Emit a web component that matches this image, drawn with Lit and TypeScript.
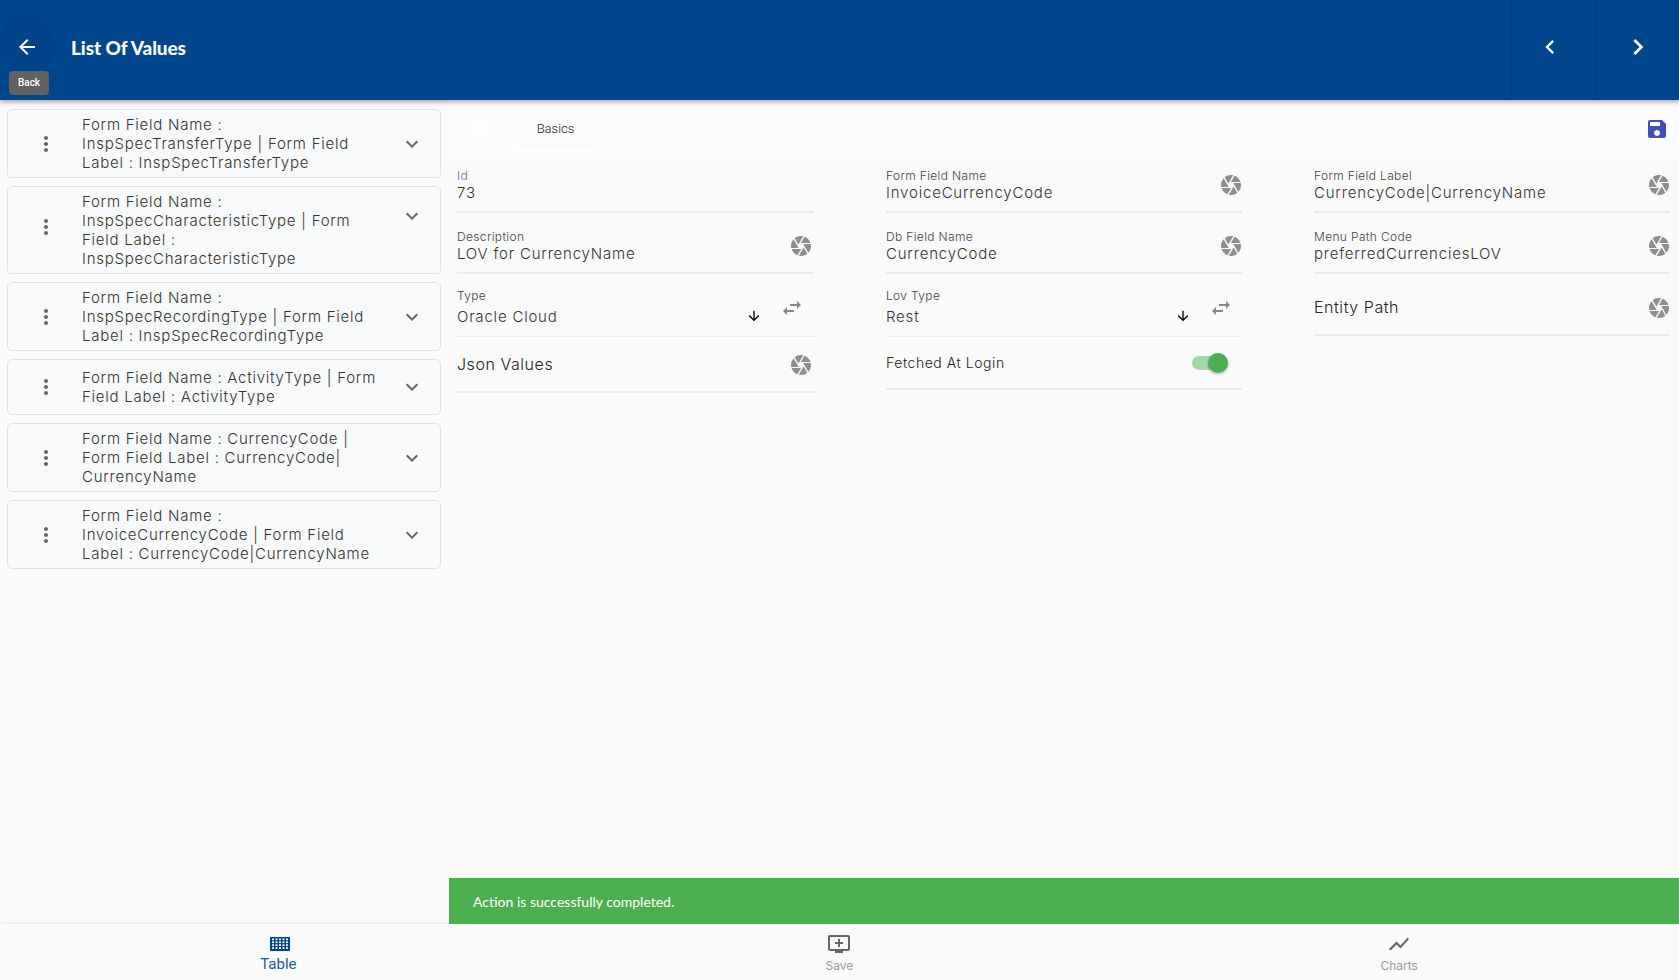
import { LitElement, html, css, svg } from 'lit';
import { customElement } from 'lit/decorators.js';

const ICONS = {
  shutter:
    'M9.4 10.5l4.77-8.26C13.47 2.09 12.75 2 12 2c-2.4 0-4.6.85-6.32 2.25l3.66 6.35.06-.1zM21.54 9c-.92-2.92-3.15-5.26-6-6.34L11.88 9h9.66zm.26 1h-7.49l.29.5 4.76 8.25C21 16.97 22 14.61 22 12c0-.69-.07-1.35-.2-2zM8.54 12l-3.9-6.75C3.01 7.03 2 9.39 2 12c0 .69.07 1.35.2 2h7.49l-1.15-2zm-6.08 3c.92 2.92 3.15 5.26 6 6.34L12.12 15H2.46zm11.27 0l-3.9 6.76c.7.15 1.42.24 2.17.24 2.4 0 4.6-.85 6.32-2.25l-3.66-6.35-.93 1.6z',
  swap: 'M6.99 11L3 15l3.99 4v-3H14v-2H6.99v-3zM21 9l-3.99-4v3H10v2h7.01v3L21 9z',
  down: 'M20 12l-1.41-1.41L13 16.17V4h-2v12.17l-5.58-5.6L4 12l8 8 8-8z',
  back: 'M20 11H7.83l5.59-5.59L12 4l-8 8 8 8 1.41-1.41L7.83 13H20v-2z',
  prev: 'M15.41 7.41L14 6l-6 6 6 6 1.41-1.41L10.83 12z',
  next: 'M10 6L8.59 7.41 13.17 12l-4.58 4.59L10 18l6-6z',
  kebab:
    'M12 8c1.1 0 2-.9 2-2s-.9-2-2-2-2 .9-2 2 .9 2 2 2zm0 2c-1.1 0-2 .9-2 2s.9 2 2 2 2-.9 2-2-.9-2-2-2zm0 6c-1.1 0-2 .9-2 2s.9 2 2 2 2-.9 2-2-.9-2-2-2z',
  chevron: 'M16.59 8.59L12 13.17 7.41 8.59 6 10l6 6 6-6z',
  save: 'M17 3H5c-1.11 0-2 .9-2 2v14c0 1.1.89 2 2 2h14c1.1 0 2-.9 2-2V7l-4-4zm-5 16c-1.66 0-3-1.34-3-3s1.34-3 3-3 3 1.34 3 3-1.34 3-3 3zm3-10H5V5h10v4z',
  queue:
    'M21 3H3c-1.11 0-2 .89-2 2v12c0 1.1.89 2 2 2h5v2h8v-2h5c1.1 0 1.99-.9 1.99-2L23 5c0-1.11-.9-2-2-2zm0 14H3V5h18v12zm-5-7v2h-3v3h-2v-3H8v-2h3V7h2v3h3z',
  chart: 'M3.5 18.49l6-6.01 4 4L22 6.92l-1.41-1.41-7.09 7.97-4-4L2 16.99z',
};

const icon = (name: keyof typeof ICONS, size = 24) => html`<svg
  class="icon"
  width=${size}
  height=${size}
  viewBox="0 0 24 24"
  fill="currentColor"
>
  ${svg`<path d=${ICONS[name]}></path>`}
</svg>`;

const CARDS = [
  {
    lines: ['Form Field Name :', 'InspSpecTransferType | Form Field', 'Label : InspSpecTransferType'],
  },
  {
    lines: [
      'Form Field Name :',
      'InspSpecCharacteristicType | Form',
      'Field Label :',
      'InspSpecCharacteristicType',
    ],
    tall: true,
  },
  {
    lines: ['Form Field Name :', 'InspSpecRecordingType | Form Field', 'Label : InspSpecRecordingType'],
  },
  { lines: ['Form Field Name : ActivityType | Form', 'Field Label : ActivityType'] },
  {
    lines: ['Form Field Name : CurrencyCode |', 'Form Field Label : CurrencyCode|', 'CurrencyName'],
  },
  {
    lines: ['Form Field Name :', 'InvoiceCurrencyCode | Form Field', 'Label : CurrencyCode|CurrencyName'],
  },
];

@customElement('app-root')
export class AppRoot extends LitElement {
  static styles = css`
    :host {
      display: flex;
      flex-direction: column;
      height: 980px;
      overflow: hidden;
      background: #fafafa;
      color: #333;
      font-family: Inter, 'Noto Sans', sans-serif;
    }
    .icon {
      display: block;
      flex: none;
    }

    .header {
      position: relative;
      z-index: 2;
      flex: none;
      display: flex;
      align-items: stretch;
      height: 100px;
      background: #00468c;
      box-shadow: 0 2px 5px rgba(0, 0, 0, 0.35);
      color: #fff;
    }
    .back {
      display: flex;
      align-items: center;
      justify-content: center;
      width: 54px;
      height: 68px;
      margin: 13px 0 0 0;
      border-radius: 50%;
      background: #00438a;
    }
    .title {
      margin: 37px 0 0 17px;
      font-family: Lato, sans-serif;
      font-size: 19px;
      font-weight: 900;
      letter-spacing: -0.1px;
      line-height: 22px;
    }
    .tooltip {
      position: absolute;
      left: 9px;
      top: 71px;
      width: 40px;
      height: 24px;
      border-radius: 4px;
      background: #616161;
      color: #fff;
      font-family: Roboto, sans-serif;
      font-size: 10px;
      font-weight: 500;
      line-height: 24px;
      text-align: center;
    }
    .nav-group {
      display: flex;
      margin-left: auto;
    }
    .nav-btn {
      display: flex;
      align-items: center;
      justify-content: center;
      width: 84px;
      padding-bottom: 6px;
      border-left: 1px solid #003f7f;
      box-sizing: border-box;
    }
    .nav-btn.prev {
      padding-right: 8px;
    }

    .main {
      position: relative;
      flex: 1;
      display: flex;
      min-height: 0;
    }
    .side {
      flex: none;
      width: 449px;
      box-sizing: border-box;
      padding: 9px 8px 0 7px;
      display: flex;
      flex-direction: column;
      gap: 8px;
    }
    .card {
      display: flex;
      align-items: center;
      box-sizing: border-box;
      min-height: 56px;
      padding: 5px 0;
      border: 1px solid #dee2e6;
      border-radius: 5px;
      background: #f8f9fa;
    }
    .kebab {
      width: 24px;
      margin-left: 26px;
      color: #666;
    }
    .card-text {
      flex: 1;
      margin-left: 24px;
      font-size: 15px;
      font-weight: 300;
      letter-spacing: 0.75px;
      line-height: 19px;
      color: #333;
      white-space: nowrap;
    }
    .chev {
      margin-right: 16px;
      color: #666;
    }
    .card.tall .chev {
      align-self: flex-start;
      margin-top: 12px;
    }
    .card.tall .kebab {
      margin-top: -7px;
    }

    .content {
      flex: 1;
      min-width: 0;
      display: flex;
      flex-direction: column;
    }
    .tabs {
      flex: none;
      display: flex;
      align-items: stretch;
      height: 57px;
      background: #fcfcfc;
    }
    .tab-back {
      display: flex;
      align-items: center;
      margin-left: 19px;
      color: #fff;
    }
    .tab {
      box-sizing: border-box;
      width: 73px;
      height: 52px;
      margin-left: 27px;
      border-bottom: 2px solid #fff;
      font-family: Roboto, sans-serif;
      font-size: 13px;
      font-weight: 300;
      line-height: 58px;
      text-align: center;
      color: #222;
    }
    .tab-save {
      display: flex;
      align-items: center;
      margin-left: auto;
      margin-right: 10px;
      color: #3f51b5;
    }
    .form {
      display: grid;
      grid-template-columns: 357px 356px 1fr;
      column-gap: 72px;
      padding: 0 9px 0 8px;
    }
    .col {
      display: flex;
      flex-direction: column;
    }
    .field {
      display: flex;
      align-items: flex-end;
      box-sizing: border-box;
      padding-bottom: 8px;
      border-bottom: 2px solid #e9ecef;
    }
    .h56 {
      height: 56px;
    }
    .h61 {
      height: 61px;
    }
    .h63 {
      height: 63px;
      padding-bottom: 9px;
      border-bottom-width: 1px;
    }
    .h62 {
      height: 62px;
    }
    .h53 {
      height: 53px;
    }
    .body {
      flex: 1;
      min-width: 0;
    }
    .label {
      font-size: 12px;
      font-weight: 300;
      letter-spacing: 0.35px;
      line-height: 14px;
      color: #444;
    }
    .label.id {
      color: #7e57c2;
    }
    .label.select {
      margin-bottom: 4px;
    }
    .value {
      font-size: 15px;
      font-weight: 300;
      letter-spacing: 0.8px;
      line-height: 20px;
      color: #333;
    }
    .shutter {
      color: #8e8e8e;
      margin: 0 -1px 6px 0;
    }
    .col:first-child .shutter {
      margin-right: 1px;
    }
    .swap {
      color: #888;
      margin: 0 10px 7px 18px;
    }
    .col:nth-child(2) .swap {
      margin-right: 9px;
    }
    .arrow {
      color: #000;
      margin-bottom: 3px;
    }
    .plain {
      padding-bottom: 15px;
    }
    .plain .value {
      font-size: 16px;
      letter-spacing: 0.55px;
      line-height: 24px;
      color: #222;
    }
    .plain .shutter {
      margin-bottom: -1px;
    }
    .plain.h53 {
      padding-bottom: 13px;
    }
    .plain .value.small {
      font-size: 14px;
      letter-spacing: 0.55px;
    }
    .toggle {
      position: relative;
      width: 36px;
      height: 14px;
      margin: 0 14px 5px 0;
    }
    .track {
      width: 34px;
      height: 14px;
      border-radius: 7px;
      background: #a5d6a7;
    }
    .thumb {
      position: absolute;
      right: 0;
      top: -3px;
      width: 20px;
      height: 20px;
      border-radius: 50%;
      background: #4caf50;
      box-shadow: 0 1px 3px rgba(0, 0, 0, 0.3);
    }

    .snack {
      position: absolute;
      left: 449px;
      right: 0;
      bottom: 0;
      height: 46px;
      padding-left: 24px;
      background: #4caf50;
      color: #fff;
      font-family: Lato, sans-serif;
      font-size: 14px;
      line-height: 47px;
    }

    .bottom {
      flex: none;
      display: grid;
      grid-template-columns: repeat(3, 1fr);
      height: 56px;
      background: #fafafa;
      box-shadow: 0 -1px 2px rgba(0, 0, 0, 0.08);
    }
    .tab-item {
      display: flex;
      flex-direction: column;
      align-items: center;
      padding-top: 8px;
      color: #999;
      font-family: Inter, sans-serif;
      font-size: 12px;
      line-height: 16px;
    }
    .tab-item span {
      margin-top: 2px;
    }
    .tab-item .icon {
      color: #666;
    }
    .tab-item.active {
      color: #1f5c9c;
      font-family: Roboto, sans-serif;
      font-size: 15px;
    }
    .tab-item.active span {
      margin: 3px 3px 0 0;
    }
    .grid-icon {
      margin: 5px 0 2px;
    }
  `;

  renderField(label: string, value: string, h = 'h61', labelClass = '') {
    return html`<div class="field ${h}">
      <div class="body">
        <div class="label ${labelClass}">${label}</div>
        <div class="value">${value}</div>
      </div>
      ${label === 'Id' ? '' : html`<span class="shutter">${icon('shutter')}</span>`}
    </div>`;
  }

  renderSelect(label: string, value: string) {
    return html`<div class="field h63">
      <div class="body">
        <div class="label select">${label}</div>
        <div class="value">${value}</div>
      </div>
      <span class="arrow">${icon('down', 16)}</span>
      <span class="swap">${icon('swap')}</span>
    </div>`;
  }

  renderPlain(label: string, h: string) {
    return html`<div class="field plain ${h}">
      <div class="body"><div class="value">${label}</div></div>
      <span class="shutter">${icon('shutter')}</span>
    </div>`;
  }

  renderGridIcon() {
    const dots = [];
    for (let y = 0; y < 4; y++) {
      for (let x = 0; x < 5; x++) {
        dots.push(svg`<rect x=${2 + x * 3.5} y=${1.5 + y * 2.9} width="2" height="1.7" fill="#fafafa"></rect>`);
      }
    }
    return html`<svg class="icon grid-icon" width="20" height="14" viewBox="0 0 20 14">
      <rect width="20" height="14" fill="#00468c"></rect>
      ${dots}
    </svg>`;
  }

  render() {
    return html`
      <div class="header">
        <div class="back">${icon('back', 24)}</div>
        <div class="title">List Of Values</div>
        <div class="tooltip">Back</div>
        <div class="nav-group">
          <div class="nav-btn prev">${icon('prev', 28)}</div>
          <div class="nav-btn">${icon('next', 32)}</div>
        </div>
      </div>
      <div class="main">
        <div class="side">
          ${CARDS.map(
            c => html`<div class="card ${c.tall ? 'tall' : ''}">
              <span class="kebab">${icon('kebab')}</span>
              <div class="card-text">${c.lines.map(l => html`<div>${l}</div>`)}</div>
              <span class="chev">${icon('chevron')}</span>
            </div>`,
          )}
        </div>
        <div class="content">
          <div class="tabs">
            <div class="tab-back">${icon('back')}</div>
            <div class="tab">Basics</div>
            <div class="tab-save">${icon('save')}</div>
          </div>
          <div class="form">
            <div class="col">
              ${this.renderField('Id', '73', 'h56', 'id')}
              ${this.renderField('Description', 'LOV for CurrencyName')}
              ${this.renderSelect('Type', 'Oracle Cloud')}
              ${this.renderPlain('Json Values', 'h56')}
            </div>
            <div class="col">
              ${this.renderField('Form Field Name', 'InvoiceCurrencyCode', 'h56')}
              ${this.renderField('Db Field Name', 'CurrencyCode')}
              ${this.renderSelect('Lov Type', 'Rest')}
              <div class="field plain h53">
                <div class="body"><div class="value small">Fetched At Login</div></div>
                <div class="toggle">
                  <div class="track"></div>
                  <div class="thumb"></div>
                </div>
              </div>
            </div>
            <div class="col">
              ${this.renderField('Form Field Label', 'CurrencyCode|CurrencyName', 'h56')}
              ${this.renderField('Menu Path Code', 'preferredCurrenciesLOV')}
              ${this.renderPlain('Entity Path', 'h62')}
            </div>
          </div>
        </div>
        <div class="snack">Action is successfully completed.</div>
      </div>
      <div class="bottom">
        <div class="tab-item active">${this.renderGridIcon()}<span>Table</span></div>
        <div class="tab-item">${icon('queue')}<span>Save</span></div>
        <div class="tab-item">${icon('chart')}<span>Charts</span></div>
      </div>
    `;
  }
}
